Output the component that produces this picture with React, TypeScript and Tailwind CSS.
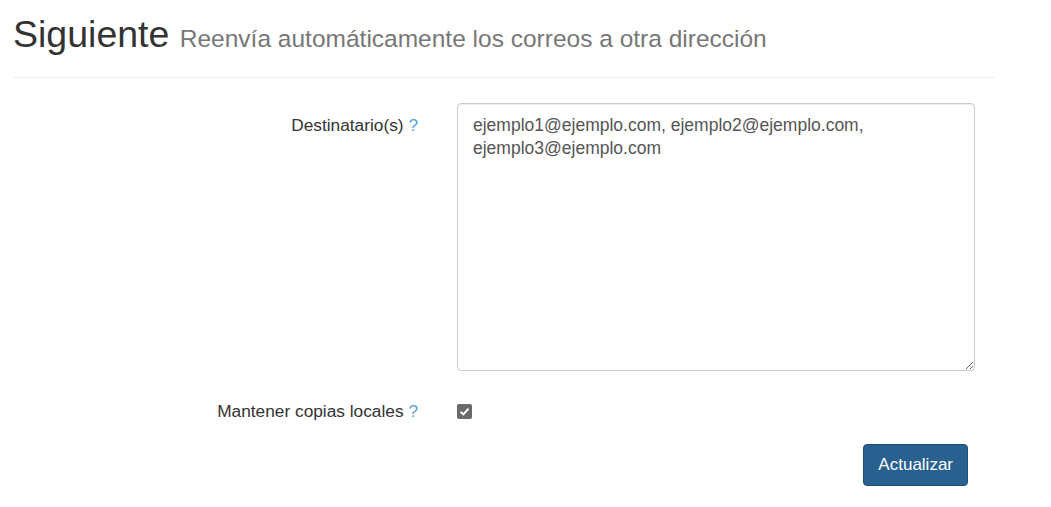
import React from "react";

const Help: React.FC = () => <span className="text-[#5aa3d8]">?</span>;

export default function App() {
  return (
    <div className="w-[1051px] h-[507px] bg-white font-['Liberation_Sans',Arial,sans-serif] text-[#333]">
      <div className="pl-[13px] pr-[56px]">
        <h1 className="pt-[9px] pb-[13px] text-[37.5px] leading-[50px] text-[#333]">
          Siguiente{" "}
          <small className="text-[24.5px] text-[#777]">
            Reenvía automáticamente los correos a otra dirección
          </small>
        </h1>
        <div className="border-t border-[#eeeeee]" />

        <div className="mt-[25px] flex">
          <label className="w-[406px] pt-[10px] pr-[1px] text-right text-[17.3px] leading-[24px]">
            Destinatario(s) <Help />
          </label>
          <div className="ml-[38px] w-[518px]">
            <textarea
              readOnly
              defaultValue="ejemplo1@ejemplo.com, ejemplo2@ejemplo.com, ejemplo3@ejemplo.com"
              className="block h-[268px] w-full resize-y rounded-[4px] border border-[#cccccc] px-[15px] pt-[10px] pb-[12px] text-[17.5px] leading-[23px] text-[#555] shadow-[inset_0_1px_1px_rgba(0,0,0,0.075)] outline-none"
            />
          </div>
        </div>

        <div className="mt-[28px] flex items-center">
          <label className="w-[406px] pr-[1px] text-right text-[17.3px] leading-[24px]">
            Mantener copias locales <Help />
          </label>
          <div className="ml-[38px]">
            <span className="flex h-[15px] w-[15px] items-center justify-center rounded-[2px] bg-[#6a6a6a]">
              <svg width="11" height="11" viewBox="0 0 10 10">
                <path d="M1.5 5.2 L4 7.6 L8.6 2.4" fill="none" stroke="white" strokeWidth="1.8" />
              </svg>
            </span>
          </div>
        </div>

        <div className="mt-[21px] flex justify-end pr-[27px]">
          <button className="h-[42px] rounded-[4px] border border-[#204d74] bg-[#286090] px-[14px] text-[17px] text-white">
            Actualizar
          </button>
        </div>
      </div>
    </div>
  );
}
